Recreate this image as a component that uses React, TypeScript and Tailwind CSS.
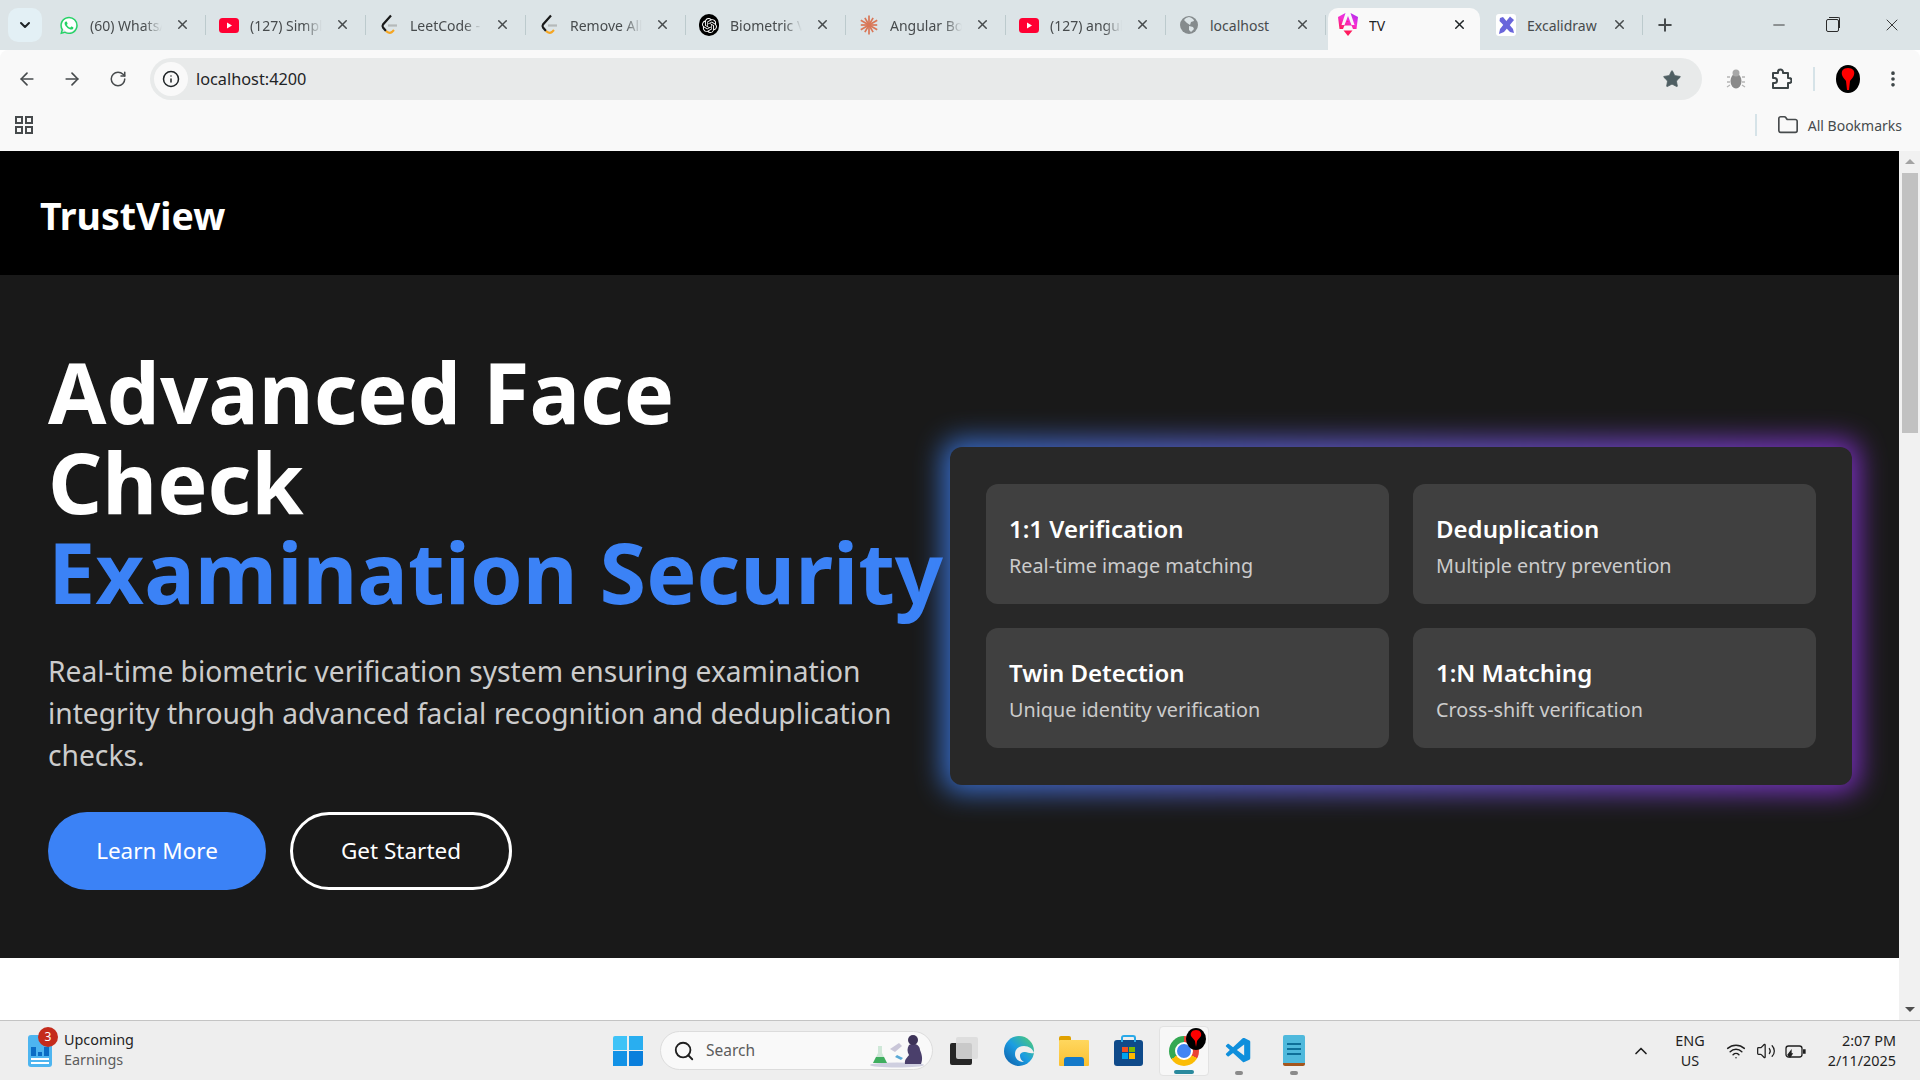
import { ArrowLeft, ArrowRight, RotateCw, Info, Star, X, Plus, Minus, ChevronDown, ChevronUp, Folder, Search, Wifi, Volume2, MoreVertical } from "lucide-react";
import { IoLogoWhatsapp } from "react-icons/io5";
import { SiOpenai } from "react-icons/si";
import { VscVscode } from "react-icons/vsc";
import type { ReactNode } from "react";

const font = "[font-family:'Noto_Sans',sans-serif]";

function WhatsAppMark() {
  return (
    <div className="relative w-[20px] h-[20px] flex items-center justify-center">
      <div className="absolute inset-[3px] rounded-full bg-white" />
      <IoLogoWhatsapp size={21} className="relative text-[#25d366]" />
    </div>
  );
}

function YouTubeMark() {
  return (
    <svg width="20" height="15" viewBox="0 0 20 15">
      <rect width="20" height="15" rx="3.500" fill="#ff0033" />
      <path d="M8 4.500 13 7.500 8 10.500Z" fill="#fff" />
    </svg>
  );
}

function LeetMark() {
  return (
    <svg width="18" height="22" viewBox="0 0 18 22" fill="none" strokeWidth="2.200">
      <path d="M11 1.500 3 10.500q-1 1.500 0 3l3 3.500" stroke="#1a1a1a" />
      <path d="M6 17q3 3 6 1l2-2" stroke="#f5a623" />
      <path d="M8 11.500h9" stroke="#b5b9ba" />
    </svg>
  );
}

function OpenAiMark() {
  return (
    <div className="w-[20px] h-[22px] rounded-full bg-black flex items-center justify-center">
      <SiOpenai size={15} className="text-white" />
    </div>
  );
}

function ClaudeMark() {
  const rays = [0, 30, 60, 90, 120, 150, 180, 210, 240, 270, 300, 330];
  return (
    <svg width="20" height="20" viewBox="0 0 20 20">
      {rays.map((r) => (
        <line key={r} x1="10" y1="10" x2="10" y2={r % 60 === 0 ? 0.5 : 1.8} stroke="#d97757" strokeWidth="1.7" transform={`rotate(${r} 10 10)`} />
      ))}
    </svg>
  );
}

function GlobeMark() {
  return (
    <svg width="18" height="18" viewBox="0 0 18 18">
      <circle cx="9" cy="9" r="9" fill="#858b8d" />
      <path d="M9 1c3 1 5 2 5 4l-3 1-1 3-3-2-3-3 2-2zM9 10l4 1 1 2-3 3-2-2z" fill="#dce4e7" />
    </svg>
  );
}

function AngularMark() {
  return (
    <svg width="20" height="24" viewBox="0 0 20 24">
      <defs>
        <linearGradient id="ng" x1="0.2" y1="1" x2="0.9" y2="0">
          <stop offset="0" stopColor="#ff1b5e" />
          <stop offset="0.5" stopColor="#f530d8" />
          <stop offset="1" stopColor="#a82bf0" />
        </linearGradient>
      </defs>
      <path d="M7.500 0 0 4l1.500 12h3.500l1.500-3.500h7L15 16h3.500L20 4 12.500 0l4 12h-3l-3.500-9-3.500 9h-3Z" fill="url(#ng)" />
      <path d="M8.500 9h3L10 5.500Z" fill="url(#ng)" />
      <path d="M5.500 17.500h9L10 23Z" fill="#ff1b5e" />
    </svg>
  );
}

function ExcalidrawMark() {
  return (
    <svg width="20" height="22" viewBox="0 0 20 22">
      <rect width="20" height="22" rx="3" fill="#fff" />
      <path d="M4 4 7 3 17 15l1 4-4-1L3.500 7Z" fill="#6965db" />
      <path d="M14 2.500 18 6 8 18l-5 2 1-5Z" fill="#6965db" />
    </svg>
  );
}

function Tab({ icon, title, fade = true, active = false }: { icon: ReactNode; title: string; fade?: boolean; active?: boolean }) {
  return (
    <div className={`relative flex items-center h-[42px] mt-[8px] pb-[8px] shrink-0 ${active ? "w-[152px] bg-[#f9f9f9] rounded-t-[10px] ml-[2px] mr-[3px] pl-[10px]" : "w-[160px] pl-[13px]"}`}>
      <div className="w-[20px] h-[20px] flex items-center justify-center shrink-0">{icon}</div>
      <span className={`ml-[11px] w-[72px] overflow-hidden whitespace-nowrap text-[14px] ${active ? "text-[#1f2426]" : "text-[#474b4d]"} ${fade ? "[mask-image:linear-gradient(to_right,black_75%,transparent)]" : ""}`}>{title}</span>
      <X size={15} strokeWidth={2.4} className={`absolute ${active ? "right-[13px] text-[#1f2426]" : "right-[16px] text-[#474b4d]"} top-[9px]`} />
      {!active && <div className="absolute right-0 top-[7px] w-[1.500px] h-[20px] bg-[#bccacd]" />}
    </div>
  );
}

function Cap({ title, text }: { title: string; text: string }) {
  return (
    <div className="h-[120px] rounded-[12px] bg-[#404040] px-[23px] pt-[27px]">
      <h3 className="text-[24px] leading-[36px] font-semibold text-white">{title}</h3>
      <p className="mt-[4px] text-[19.800px] leading-[30px] text-[#cccccc]">{text}</p>
    </div>
  );
}

function TaskIcon({ children, active = false, dot = false }: { children: ReactNode; active?: boolean; dot?: boolean }) {
  return (
    <div className={`relative w-[50px] h-[50px] mx-[2.500px] flex items-center justify-center rounded-[4px] ${active ? "bg-[#f7f7f7] border border-[#e2e2e2]" : ""}`}>
      {children}
      {active && <div className="absolute bottom-[1px] left-[14px] w-[20px] h-[4px] rounded-full bg-[#2a8a9e]" />}
      {dot && <div className="absolute bottom-[1px] left-[21px] w-[8px] h-[4px] rounded-full bg-[#8a8a8a]" />}
    </div>
  );
}

export default function App() {
  return (
    <div className={`h-screen w-full overflow-hidden flex flex-col bg-white ${font}`}>
      {/* tab strip */}
      <div className="h-[50px] bg-[#dce4e7] flex items-start shrink-0 relative">
        <div className="ml-[8px] mt-[8px] w-[34px] h-[34px] rounded-[10px] bg-[#e3f0f5] flex items-center justify-center">
          <ChevronDown size={16} strokeWidth={3} className="text-[#1f2426]" />
        </div>
        <div className="flex ml-[4px]">
          <Tab icon={<WhatsAppMark />} title="(60) WhatsApp" />
          <Tab icon={<YouTubeMark />} title="(127) Simple" />
          <Tab icon={<LeetMark />} title="LeetCode - The" />
          <Tab icon={<LeetMark />} title="Remove All" />
          <Tab icon={<OpenAiMark />} title="Biometric Ver" />
          <Tab icon={<ClaudeMark />} title="Angular Boot" />
          <Tab icon={<YouTubeMark />} title="(127) angular" />
          <Tab icon={<GlobeMark />} title="localhost" fade={false} />
          <Tab icon={<AngularMark />} title="TV" fade={false} active />
          <Tab icon={<ExcalidrawMark />} title="Excalidraw" fade={false} />
        </div>
        <Plus size={20} strokeWidth={2.4} className="ml-[12px] mt-[15px] text-[#474b4d]" />
        <div className="ml-auto flex items-center h-[50px] text-[#2b2b2b]">
          <Minus size={18} strokeWidth={1.2} className="mr-[38px]" />
          <div className="relative w-[13px] h-[13px] border border-[#2b2b2b] rounded-[2px] mr-[43px] after:absolute after:content-[''] after:left-[2px] after:-top-[3px] after:w-[11px] after:h-[11px] after:border-t after:border-r after:border-[#2b2b2b] after:rounded-tr-[2px]" />
          <X size={20} strokeWidth={1.1} className="mr-[18px]" />
        </div>
      </div>

      {/* toolbar */}
      <div className="h-[58px] bg-[#f9f9f9] flex items-center shrink-0 rounded-t-[8px] text-[#474b4d]">
        <ArrowLeft size={20} strokeWidth={2} className="ml-[17px]" />
        <ArrowRight size={20} strokeWidth={2} className="ml-[25px]" />
        <RotateCw size={18} strokeWidth={2} className="ml-[27px]" />
        <div className="ml-[23px] w-[1552px] h-[42px] rounded-full bg-[#e8eaea] flex items-center pl-[4px]">
          <div className="w-[34px] h-[34px] rounded-full bg-[#f9f9f9] flex items-center justify-center">
            <Info size={18} strokeWidth={2} className="text-[#1f2426]" />
          </div>
          <span className="ml-[8px] text-[16.300px] text-[#1f2426]">localhost:4200</span>
          <Star size={20} fill="#4f5f63" strokeWidth={1} className="ml-auto mr-[20px] text-[#4f5f63]" />
        </div>
        <svg width="20" height="22" viewBox="0 0 20 22" className="ml-[24px]">
          <ellipse cx="10" cy="13" rx="5.500" ry="7.500" fill="#8a8a8a" />
          <circle cx="10" cy="5" r="3.500" fill="#a8a8a8" />
          <path d="M1 9h3M16 9h3M1 14h3M16 14h3M1 19l3-2M19 19l-3-2" stroke="#b5b5b5" strokeWidth="1.300" />
        </svg>
        <svg width="22" height="24" viewBox="0 0 22 24" fill="none" stroke="#3c4446" strokeWidth="2" strokeLinejoin="round" className="ml-[24px]">
          <path d="M3 6h5V5a2.500 2.500 0 0 1 5 0v1h5v5h1a2.500 2.500 0 0 1 0 5h-1v5H3v-5h1.500a2.500 2.500 0 0 0 0-5H3Z" />
        </svg>
        <div className="ml-[21px] w-[2px] h-[24px] bg-[#d6e3e8]" />
        <svg width="24" height="28" viewBox="0 0 24 28" className="ml-[21px]">
          <ellipse cx="12" cy="14" rx="12" ry="14" fill="#000" />
          <path d="M12 3c5 0 7 3 6 7-1 3-3 4-4 6l-1 9h-2l-1-9c-1-2-3-3-4-6-1-4 1-7 6-7Z" fill="#f00" />
        </svg>
        <MoreVertical size={20} strokeWidth={2.4} className="ml-[23px] text-[#3c4446]" />
      </div>

      {/* bookmarks bar */}
      <div className="h-[43px] pb-[9px] bg-[#f9f9f9] flex items-center shrink-0">
        <svg width="18" height="18" viewBox="0 0 18 18" fill="none" stroke="#474b4d" strokeWidth="2" className="ml-[15px]">
          <rect x="1" y="1" width="6" height="6" />
          <rect x="11" y="1" width="6" height="6" />
          <rect x="1" y="11" width="6" height="6" />
          <rect x="11" y="11" width="6" height="6" />
        </svg>
        <div className="ml-auto w-[2px] h-[22px] bg-[#d6e3e8]" />
        <Folder size={22} strokeWidth={1.800} className="ml-[20px] text-[#474b4d]" />
        <span className="ml-[9px] mr-[18px] text-[14px] text-[#474b4d]">All Bookmarks</span>
      </div>

      {/* page */}
      <div className="flex-1 flex min-h-0">
        <main className="flex-1 flex flex-col min-w-0 bg-white">
          <header className="h-[124px] bg-black flex items-center pl-[40px] pt-[6px] shrink-0">
            <span className="text-[37.500px] font-bold text-white">TrustView</span>
          </header>
          <section className="h-[683px] bg-[#191919] grid grid-cols-[902px_902px] items-center pl-[48px] shrink-0">
            <div className="whitespace-nowrap">
              <h1 className="pt-[3px] text-[84.500px] leading-[90px] font-bold text-white">
                Advanced Face
                <br />
                Check
                <br />
                <span className="text-[#3b82f6]">Examination Security</span>
              </h1>
              <p className="mt-[33px] text-[28.200px] leading-[42px] text-[#cccccc]">
                Real-time biometric verification system ensuring examination
                <br />
                integrity through advanced facial recognition and deduplication
                <br />
                checks.
              </p>
              <div className="mt-[36px] flex gap-[24px]">
                <button className="w-[218px] h-[78px] pt-[1px] rounded-full bg-[#3b82f6] text-[22.500px] text-white">Learn More</button>
                <button className="w-[222px] h-[78px] pt-[1px] rounded-full border-[3px] border-white text-[22.500px] text-white">Get Started</button>
              </div>
            </div>
            <div className="relative mb-[2px]">
              <div className="absolute -inset-[7px] rounded-[16px] bg-gradient-to-r from-[#3b82f6] to-[#9333ea] blur-[14px] opacity-80" />
              <div className="relative rounded-[12px] bg-[#282828] px-[36px] py-[37px] grid grid-cols-2 gap-[24px]">
                <Cap title="1:1 Verification" text="Real-time image matching" />
                <Cap title="Deduplication" text="Multiple entry prevention" />
                <Cap title="Twin Detection" text="Unique identity verification" />
                <Cap title="1:N Matching" text="Cross-shift verification" />
              </div>
            </div>
          </section>
        </main>
        {/* scrollbar */}
        <div className="w-[21px] bg-[#f1f1f1] flex flex-col items-center shrink-0">
          <div className="mt-[8px] w-0 h-0 border-x-[5px] border-x-transparent border-b-[5px] border-b-[#a3a3a3]" />
          <div className="mt-[9px] w-[16px] h-[260px] bg-[#c1c1c1]" />
          <div className="mt-auto mb-[8px] w-0 h-0 border-x-[5px] border-x-transparent border-t-[5px] border-t-[#505050]" />
        </div>
      </div>

      {/* taskbar */}
      <div className="h-[60px] bg-[#eeeeee] border-t border-[#c4c4c4] flex items-center shrink-0">
        <div className="w-[613px] flex items-center pl-[28px] shrink-0">
          <div className="relative w-[24px] h-[32px] rounded-[3px] bg-[#4db5f0] flex flex-col justify-end p-[3px] gap-[2px]">
            <div className="absolute -top-[8px] left-[10px] w-[20px] h-[20px] rounded-full bg-[#c42b1c] text-white text-[12px] leading-[20px] text-center">3</div>
            <div className="h-[9px] flex items-end gap-[2px]">
              <div className="w-[5px] h-[9px] bg-[#0a6cc4]" />
              <div className="w-[5px] h-[4px] bg-[#0a6cc4]" />
              <div className="w-[5px] h-[9px] bg-[#0a6cc4]" />
            </div>
            <div className="h-[2px] bg-white" />
            <div className="h-[2px] bg-white" />
          </div>
          <div className="ml-[12px] mt-[-2px] text-[14.400px] leading-[20px]">
            <div className="text-[#1f1f1f]">Upcoming</div>
            <div className="text-[#5c5c5c]">Earnings</div>
          </div>
        </div>
        <div className="w-[30px] h-[30px] grid grid-cols-2 gap-[1.500px] shrink-0">
          <div className="bg-[#3fc3f7] rounded-tl-[2px]" />
          <div className="bg-[#29aef0]" />
          <div className="bg-[#1292e6]" />
          <div className="bg-[#0a7fdc] rounded-br-[2px]" />
        </div>
        <div className="ml-[17px] w-[273px] h-[39px] rounded-full bg-[#f9f9f9] border border-[#dcdcdc] flex items-center pl-[12px] shrink-0">
          <Search size={22} strokeWidth={2} className="text-[#1f1f1f]" />
          <span className="ml-[11px] text-[15.500px] text-[#5c5c5c]">Search</span>
          <svg width="58" height="36" viewBox="0 0 58 36" className="ml-auto mr-[5px]">
            <ellipse cx="28" cy="32" rx="27" ry="2.500" fill="#cfcfe0" />
            <path d="M9 13h4v7l5 10H4l5-10Z" fill="#cfe8d8" />
            <path d="M7 24h8l3 6H4Z" fill="#3fae5f" />
            <path d="M21 16l9-6 3 3-7 6Z" fill="#c9c6d8" />
            <path d="M28 22l6 3-2 2-6-3Z" fill="#5aa9d6" />
            <path d="M40 12c5-3 11 0 11 5 2 5 3 9 1 14H36c-1-5 3-7 4-9-2-3-2-7 0-10Z" fill="#4a3f6b" />
            <circle cx="44" cy="7" r="5" fill="#3d3358" />
          </svg>
        </div>
        <div className="ml-[3px] flex items-center shrink-0">
          <TaskIcon>
            <div className="relative w-[28px] h-[28px]">
              <div className="absolute left-0 bottom-0 w-[22px] h-[22px] rounded-[2px] bg-[#262626]" />
              <div className="absolute right-0 top-0 w-[22px] h-[22px] rounded-[2px] bg-[#dcdcdc]/90" />
            </div>
          </TaskIcon>
          <TaskIcon>
            <svg width="30" height="30" viewBox="0 0 30 30">
              <defs>
                <linearGradient id="edge" x1="0" y1="1" x2="1" y2="0">
                  <stop offset="0" stopColor="#0c59a4" />
                  <stop offset="0.5" stopColor="#1b9de2" />
                  <stop offset="1" stopColor="#53d06a" />
                </linearGradient>
              </defs>
              <circle cx="15" cy="15" r="15" fill="url(#edge)" />
              <path d="M30 17c-1-4-5-7-10-7-5 0-9 3-9 8 0 5 4 8 9 8-2-1-4-3-4-6 0-3 2-4 5-4s5 2 9 1Z" fill="#eeeeee" />
            </svg>
          </TaskIcon>
          <TaskIcon>
            <div className="relative w-[30px] h-[30px]">
              <div className="absolute top-0 left-0 w-[12px] h-[6px] rounded-t-[2px] bg-[#e0a100]" />
              <div className="absolute top-[4px] left-0 right-0 bottom-0 rounded-[1px] bg-gradient-to-b from-[#ffd75e] to-[#fbc02d]" />
              <div className="absolute bottom-0 left-[5px] w-[20px] h-[9px] rounded-t-[3px] bg-[#1479c9]" />
            </div>
          </TaskIcon>
          <TaskIcon>
            <div className="relative w-[29px] h-[26px] mt-[4px] rounded-[3px] bg-[#0f4a8a] grid grid-cols-2 gap-[1px] px-[8px] py-[7px]">
              <div className="absolute -top-[5px] left-[7px] w-[15px] h-[7px] border-2 border-b-0 border-[#29a9e8] rounded-t-[3px]" />
              <div className="bg-[#f25022]" />
              <div className="bg-[#7fba00]" />
              <div className="bg-[#00a4ef]" />
              <div className="bg-[#ffb900]" />
            </div>
          </TaskIcon>
          <TaskIcon active>
            <div className="relative w-[30px] h-[30px] rounded-full bg-[conic-gradient(#ea4335_0_33%,#fbbc05_33%_66%,#34a853_66%_100%)] flex items-center justify-center">
              <div className="w-[14px] h-[14px] rounded-full bg-[#4285f4] border-2 border-white box-content" />
              <svg width="20" height="22" viewBox="0 0 20 22" className="absolute -top-[8px] -right-[7px]">
                <ellipse cx="10" cy="11" rx="10" ry="11" fill="#000" />
                <path d="M10 2c4 0 6 3 5 6-1 2-3 3-4 5l-1 6-1-6c-1-2-3-3-4-5-1-3 1-6 5-6Z" fill="#f00" />
              </svg>
            </div>
          </TaskIcon>
          <TaskIcon dot>
            <VscVscode size={30} className="text-[#0f8fdc]" />
          </TaskIcon>
          <TaskIcon dot>
            <div className="w-[22px] h-[31px] rounded-[2px] bg-[#4fb9dc] border-b-[3px] border-[#a4561d] flex flex-col justify-center gap-[3px] px-[4px]">
              <div className="h-[2px] bg-[#0e6f99]" />
              <div className="h-[2px] bg-[#0e6f99]" />
              <div className="h-[2px] bg-[#0e6f99]" />
            </div>
          </TaskIcon>
        </div>
        <div className="ml-auto flex items-center text-[#1f1f1f] shrink-0">
          <ChevronUp size={20} strokeWidth={2} />
          <div className="ml-[24px] text-center text-[14.400px] leading-[20px]">
            <div>ENG</div>
            <div>US</div>
          </div>
          <Wifi size={20} strokeWidth={1.800} className="ml-[21px]" />
          <Volume2 size={20} strokeWidth={1.500} className="ml-[10px]" />
          <svg width="21" height="16" viewBox="0 0 21 16" fill="none" stroke="#1f1f1f" strokeWidth="1.300" className="ml-[9px]">
            <rect x="1" y="3" width="16" height="11" rx="2.500" />
            <path d="M18 7h2v3h-2" fill="#1f1f1f" />
            <path d="M3 12l3-4v3h1l-2 3Z" fill="#1f1f1f" />
          </svg>
          <div className="ml-[22px] mr-[24px] text-right text-[14.400px] leading-[20px]">
            <div>2:07 PM</div>
            <div>2/11/2025</div>
          </div>
        </div>
      </div>
    </div>
  );
}
